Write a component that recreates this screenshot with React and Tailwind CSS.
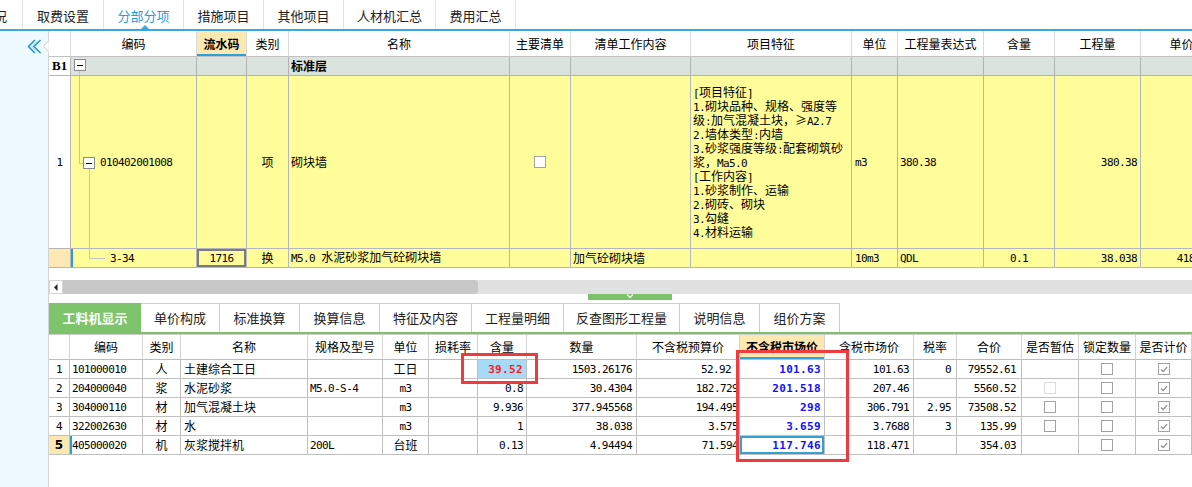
import React from "react";

const MONO = "font-['DejaVu_Sans_Mono',monospace] text-[11px] tracking-[-0.6px]";
const MONOB = "font-['DejaVu_Sans_Mono',monospace] text-[11px] font-bold tracking-[0.35px]";

function Txt({ s, bold }) {
  const parts = String(s).split(/([\x20-\x7e]+)/).filter(Boolean);
  return (
    <span className="whitespace-nowrap">
      {parts.map((p, i) =>
        /^[\x20-\x7e]+$/.test(p) ? (
          <span key={i} className={bold ? MONOB : MONO}>
            {p}
          </span>
        ) : (
          <span key={i}>{p}</span>
        )
      )}
    </span>
  );
}

function Check({ checked, faded }) {
  return (
    <div
      className={`w-[12px] h-[12px] border bg-white flex items-center justify-center ${
        faded ? "border-[#dedede]" : "border-[#a2a2a2]"
      }`}
    >
      {checked && (
        <svg width="8" height="7" viewBox="0 0 8 7">
          <path d="M1 3.5 L3.2 5.6 L7 1.2" fill="none" stroke="#8a8a8a" strokeWidth="1.3" />
        </svg>
      )}
    </div>
  );
}

function MinusBox() {
  return (
    <div className="w-[12px] h-[12px] border border-[#8a8a8a] bg-white flex items-center justify-center">
      <div className="w-[6px] h-[1px] bg-black" />
    </div>
  );
}

function TopTabs() {
  const tabs = [
    ["取费设置", "w-[81px]", false],
    ["分部分项", "w-[80px]", true],
    ["措施项目", "w-[80px]", false],
    ["其他项目", "w-[80px]", false],
    ["人材机汇总", "w-[92px]", false],
    ["费用汇总", "w-[80px]", false],
  ];
  return (
    <div className="flex h-[31px] border-b-2 border-[#3ea7dc] bg-white text-[13px] text-[#222]">
      <div className="w-[23px] border-r border-[#e2e2e2] overflow-hidden flex justify-end items-center pt-[2px]">
        <span className="whitespace-nowrap mr-[15px] shrink-0">工程概况</span>
      </div>
      {tabs.map(([t, w, active]) => (
        <div
          key={t}
          className={`${w} border-r border-[#e2e2e2] flex items-center justify-center pt-[2px] relative ${
            active ? "text-[#1f9ee0]" : ""
          }`}
        >
          {t}
          {active && (
            <svg className="absolute bottom-0 left-[37px]" width="8" height="4" viewBox="0 0 8 4">
              <path d="M0 4 L4 0 L8 4Z" fill="#3ea7dc" />
            </svg>
          )}
        </div>
      ))}
    </div>
  );
}

function LeftStrip() {
  return (
    <div className="w-[49px] shrink-0 bg-[#eefafd] border-r border-[#d4d4d4] pt-[8px] pl-[27px]">
      <svg width="22" height="16" viewBox="0 0 22 16" className="overflow-visible">
        <polyline points="8,1 1.5,7.5 8,14" fill="none" stroke="#1b96d4" strokeWidth="1.5" />
        <polyline points="10,2.5 5,7.5 10,12.5" fill="none" stroke="#8fd2f2" strokeWidth="1" />
        <polyline points="13.5,1 7,7.5 13.5,14" fill="none" stroke="#1b96d4" strokeWidth="1.5" />
        <polygon points="22,1.5 16.5,7.5 22,13.5" fill="#ffffff" stroke="#d0d0d0" strokeWidth="1" />
        <rect x="21.6" y="2.2" width="1" height="10.6" fill="#ffffff" />
      </svg>
    </div>
  );
}

const TOPCOLS =
  "grid grid-cols-[22px_126px_50px_42px_221px_61px_120px_161px_46px_86px_71px_86px_82px] w-[1174px]";

const TH = "flex items-center justify-center border-r border-b border-r-[#dadada] border-b-[#c2c2c2] whitespace-nowrap";
const GB = "border-r border-b border-[#b3b3b3] bg-[#dbe3de]";
const YB = "border-r border-b border-[#b4b6bf] bg-[#fffc9a]";

function TopTable() {
  const hdr = ["", "编码", "流水码", "类别", "名称", "主要清单", "清单工作内容", "项目特征", "单位", "工程量表达式", "含量", "工程量", "单价"];
  const feat = [
    "[项目特征]",
    "1.砌块品种、规格、强度等",
    "级:加气混凝土块，≥A2.7",
    "2.墙体类型:内墙",
    "3.砂浆强度等级:配套砌筑砂",
    "浆，Ma5.0",
    "[工作内容]",
    "1.砂浆制作、运输",
    "2.砌砖、砌块",
    "3.勾缝",
    "4.材料运输",
  ];
  return (
    <div className="flex flex-col">
      {/* header */}
      <div className={`${TOPCOLS} h-[26px]`}>
        {hdr.map((h, i) =>
          i === 2 ? (
            <div key={i} className={`${TH} bg-[#fde8b2] font-bold shadow-[inset_0_-2px_0_#2ea0d8]`}>
              {h}
            </div>
          ) : (
            <div key={i} className={`${TH} bg-white`}>
              {h}
            </div>
          )
        )}
      </div>
      {/* B1 row */}
      <div className={`${TOPCOLS} h-[19px]`}>
        <div className="bg-white border-r border-b border-[#b5b5b5] flex items-center pl-[3px] font-['Liberation_Serif',serif] font-bold text-[13px]">
          B1
        </div>
        <div className={`${GB} flex flex-col pl-[3px] pt-[2px]`}>
          <MinusBox />
          <div className="ml-[5px] w-[1px] flex-1 bg-[#c4c4c4]" />
        </div>
        <div className={GB} />
        <div className={GB} />
        <div className={`${GB} flex items-center pl-[2px] font-bold`}>标准层</div>
        <div className={GB} />
        <div className={GB} />
        <div className={GB} />
        <div className={GB} />
        <div className={GB} />
        <div className={GB} />
        <div className={GB} />
        <div className={GB} />
      </div>
      {/* row 1 */}
      <div className={`${TOPCOLS} h-[173px]`}>
        <div className="bg-white border-r border-b border-[#b5b5b5] flex items-center justify-center">
          <Txt s="1" />
        </div>
        <div className={`${YB} relative flex items-center pl-[29px]`}>
          <svg className="absolute left-0 top-0" width="126" height="173" viewBox="0 0 126 173">
            <line x1="8.5" y1="0" x2="8.5" y2="87.5" stroke="#c4c4c4" />
            <line x1="8.5" y1="87.5" x2="12" y2="87.5" stroke="#c4c4c4" />
            <line x1="18.5" y1="93" x2="18.5" y2="173" stroke="#c4c4c4" />
            <rect x="12.5" y="81.5" width="11" height="11" fill="#ffffff" stroke="#8a8a8a" />
            <line x1="15" y1="87.5" x2="21" y2="87.5" stroke="#000000" />
          </svg>
          <span className="relative">
            <Txt s="010402001008" />
          </span>
        </div>
        <div className={YB} />
        <div className={`${YB} flex items-center justify-center`}>项</div>
        <div className={`${YB} flex items-center pl-[2px]`}>砌块墙</div>
        <div className={`${YB} flex items-center justify-center`}>
          <Check />
        </div>
        <div className={YB} />
        <div className={`${YB} flex flex-col justify-center pl-[2px] leading-[14px]`}>
          {feat.map((l, i) => (
            <div key={i} className="whitespace-nowrap h-[14px]">
              <Txt s={l} />
            </div>
          ))}
        </div>
        <div className={`${YB} flex items-center pl-[3px]`}>
          <Txt s="m3" />
        </div>
        <div className={`${YB} flex items-center pl-[2px]`}>
          <Txt s="380.38" />
        </div>
        <div className={YB} />
        <div className={`${YB} flex items-center justify-end pr-[3px]`}>
          <Txt s="380.38" />
        </div>
        <div className={YB} />
      </div>
      {/* row 2 */}
      <div className={`${TOPCOLS} h-[19px]`}>
        <div className="bg-[#fde8b4] border-r border-b border-[#b5b5b5]" />
        <div className={`${YB} relative flex items-center pl-[39px] shadow-[inset_2px_0_0_#2a9fd6]`}>
          <svg className="absolute left-0 top-0" width="40" height="19" viewBox="0 0 40 19">
            <line x1="18.5" y1="0" x2="18.5" y2="9.5" stroke="#c4c4c4" />
            <line x1="18.5" y1="9.5" x2="34" y2="9.5" stroke="#c4c4c4" />
          </svg>
          <span className="relative">
            <Txt s="3-34" />
          </span>
        </div>
        <div className={`${YB} flex items-center justify-center shadow-[inset_0_0_0_2px_#7b7b7b]`}>
          <Txt s="1716" />
        </div>
        <div className={`${YB} flex items-center justify-center`}>换</div>
        <div className={`${YB} flex items-center pl-[2px]`}>
          <Txt s="M5.0 水泥砂浆加气砼砌块墙" />
        </div>
        <div className={YB} />
        <div className={`${YB} flex items-center pl-[2px]`}>加气砼砌块墙</div>
        <div className={YB} />
        <div className={`${YB} flex items-center pl-[3px]`}>
          <Txt s="10m3" />
        </div>
        <div className={`${YB} flex items-center pl-[2px]`}>
          <Txt s="QDL" />
        </div>
        <div className={`${YB} flex items-center justify-center`}>
          <Txt s="0.1" />
        </div>
        <div className={`${YB} flex items-center justify-end pr-[3px]`}>
          <Txt s="38.038" />
        </div>
        <div className={`${YB} flex items-center justify-end pr-[3px]`}>
          <Txt s="4183.96" />
        </div>
      </div>
    </div>
  );
}

function Scrollbar() {
  return (
    <div className="h-[14px] flex bg-[#e1e1e1]">
      <div className="w-[14px] bg-white border border-[#d6d6d6] flex items-center justify-center">
        <svg width="4" height="7" viewBox="0 0 4 7">
          <path d="M3.5 0 L0 3.5 L3.5 7Z" fill="#222" />
        </svg>
      </div>
      <div className="w-[415px] bg-[#c8c8c8] rounded-r-[3px]" />
    </div>
  );
}

function Splitter() {
  return (
    <div className="h-[6px] flex">
      <div className="w-[539px]" />
      <div className="w-[84px] bg-[#7dc26b] flex justify-center">
        <svg width="8" height="5" viewBox="0 0 8 5">
          <polyline points="1,0.5 4,3.5 7,0.5" fill="none" stroke="#ffffff" strokeWidth="1.2" />
        </svg>
      </div>
    </div>
  );
}

function BottomTabs() {
  const tabs = [
    ["单价构成", "w-[79px]"],
    ["标准换算", "w-[80px]"],
    ["换算信息", "w-[80px]"],
    ["特征及内容", "w-[92px]"],
    ["工程量明细", "w-[92px]"],
    ["反查图形工程量", "w-[116px]"],
    ["说明信息", "w-[80px]"],
    ["组价方案", "w-[80px]"],
  ];
  return (
    <div className="h-[31px] border-b-2 border-[#7dc26b] flex text-[13px] text-[#222]">
      <div className="w-[92px] bg-[#7ec46c] text-white font-bold flex items-center justify-center">工料机显示</div>
      {tabs.map(([t, w]) => (
        <div key={t} className={`${w} border-t border-r border-[#b5e3a2] flex items-center justify-center`}>
          {t}
        </div>
      ))}
    </div>
  );
}

const BCOLS =
  "grid grid-cols-[21px_73px_38px_127px_75px_46px_49px_49px_110px_103px_85px_89px_43px_65px_57px_57px_56px] w-[1143px]";
const BH = "flex items-center justify-center border-r border-b border-r-[#d3d3d3] border-b-[#bcbcbc] whitespace-nowrap";
const BC = "border-r border-b border-[#bfbfbf] flex items-center whitespace-nowrap";

function BottomTable() {
  const hdr = ["", "编码", "类别", "名称", "规格及型号", "单位", "损耗率", "含量", "数量", "不含税预算价", "不含税市场价", "含税市场价", "税率", "合价", "是否暂估", "锁定数量", "是否计价"];
  const rows = [
    ["1", "101000010", "人", "土建综合工日", "", "工日", "39.52", "1503.26176", "52.92", "101.63", "101.63", "0", "79552.61", null],
    ["2", "204000040", "浆", "水泥砂浆", "M5.0-S-4", "m3", "0.8", "30.4304", "182.729", "201.518", "207.46", "", "5560.52", "faded"],
    ["3", "304000110", "材", "加气混凝土块", "", "m3", "9.936", "377.945568", "194.495", "298", "306.791", "2.95", "73508.52", "box"],
    ["4", "322002630", "材", "水", "", "m3", "1", "38.038", "3.575", "3.659", "3.7688", "3", "135.99", "box"],
    ["5", "405000020", "机", "灰浆搅拌机", "200L", "台班", "0.13", "4.94494", "71.594", "117.746", "118.471", "", "354.03", null],
  ];
  return (
    <div className="flex flex-col">
      <div className={`${BCOLS} h-[26px] border-t border-[#cfcfcf]`}>
        {hdr.map((h, i) =>
          i === 10 ? (
            <div key={i} className={`${BH} bg-[#fde8b2] font-bold shadow-[inset_0_-2px_0_#33a3da]`}>
              {h}
            </div>
          ) : (
            <div key={i} className={`${BH} bg-white`}>
              {h}
            </div>
          )
        )}
      </div>
      {rows.map((r, ri) => {
        const last = ri === 4;
        const first = ri === 0;
        return (
          <div key={ri} className={`${BCOLS} h-[19px]`}>
            <div className={`${BC} justify-center ${last ? "bg-[#fde8b4] font-bold" : "bg-white"}`}>
              {last ? <span className="font-['DejaVu_Sans',sans-serif] text-[12px] font-bold">5</span> : <Txt s={r[0]} />}
            </div>
            <div className={`${BC} pl-[2px] ${last ? "shadow-[inset_2px_0_0_#2a9fd6]" : ""}`}>
              <Txt s={r[1]} />
            </div>
            <div className={`${BC} justify-center`}>{r[2]}</div>
            <div className={`${BC} pl-[3px]`}>{r[3]}</div>
            <div className={`${BC} pl-[2px]`}>
              <Txt s={r[4]} />
            </div>
            <div className={`${BC} justify-center`}>
              <Txt s={r[5]} />
            </div>
            <div className={BC} />
            {first ? (
              <div className={`${BC} justify-end pr-[3px] bg-[#a6daf8] text-[#ff1a1a]`}>
                <Txt s={r[6]} bold />
              </div>
            ) : (
              <div className={`${BC} justify-end pr-[3px]`}>
                <Txt s={r[6]} />
              </div>
            )}
            <div className={`${BC} justify-end pr-[4px]`}>
              <Txt s={r[7]} />
            </div>
            <div className={`${BC} justify-end ${first ? "pr-[8px]" : "pr-[1px]"} overflow-hidden`}>
              <Txt s={r[8]} />
            </div>
            <div className={`${BC} justify-end pr-[3px] text-[#1010ff] ${last ? "shadow-[inset_0_0_0_2px_#34a0d4]" : ""}`}>
              <Txt s={r[9]} bold />
            </div>
            <div className={`${BC} justify-end pr-[4px]`}>
              <Txt s={r[10]} />
            </div>
            <div className={`${BC} justify-end pr-[5px]`}>
              <Txt s={r[11]} />
            </div>
            <div className={`${BC} justify-end pr-[5px]`}>
              <Txt s={r[12]} />
            </div>
            <div className={`${BC} justify-center`}>
              {r[13] === "faded" && <Check faded />}
              {r[13] === "box" && <Check />}
            </div>
            <div className={`${BC} justify-center`}>
              <Check />
            </div>
            <div className={`${BC} justify-center`}>
              <Check checked />
            </div>
          </div>
        );
      })}
    </div>
  );
}

export default function App() {
  return (
    <div className="w-[1192px] h-[487px] overflow-hidden bg-white text-[12px] leading-[14px] text-black font-['Noto_Sans_CJK_SC','Noto_Sans',sans-serif] relative">
      <TopTabs />
      <div className="flex h-[456px]">
        <LeftStrip />
        <div className="w-[1143px] flex flex-col overflow-hidden">
          <TopTable />
          <div className="h-[12px] shrink-0" />
          <Scrollbar />
          <Splitter />
          <div className="h-[3px] shrink-0" />
          <BottomTabs />
          <BottomTable />
        </div>
      </div>
      {/* annotation boxes */}
      <div className="absolute left-[461px] top-[353px] w-[77px] h-[31px] border-[3px] border-[#ef3a3e]" />
      <div className="absolute left-[736px] top-[350px] w-[113px] h-[112px] border-[3px] border-[#ef3a3e]" />
    </div>
  );
}
